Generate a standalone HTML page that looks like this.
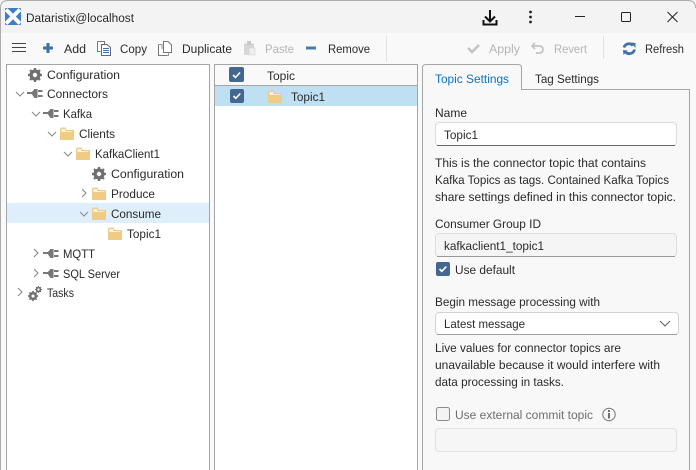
<!DOCTYPE html>
<html><head><meta charset="utf-8">
<style>
html,body{margin:0;padding:0;width:696px;height:470px;overflow:hidden;background:#f3f3f3}
svg{display:block}
text{font-family:"Liberation Sans",sans-serif;font-size:12.4px;fill:#2a2a2a}
.d{fill:#b5b5b5}
.g{fill:#6e6e6e}
</style></head><body>
<svg width="696" height="470" viewBox="0 0 696 470" xmlns="http://www.w3.org/2000/svg">
<defs>
<g id="folder"><path d="M0.5 2V12.5H13.5V3.5H6.5L5 1H1.5Z" fill="#f0cb85" stroke="#f0cb85"/><path d="M1.5 2H4.6L5.9 4.2H12.5V5H1.5Z" fill="#fff6e4"/></g>
<g id="plug"><path d="M0 4H5V6H0Z" fill="#777"/><path d="M4 5L7.5 1H10.5V10H7.5Z" fill="#777"/><path d="M11 2H15.5V4H11ZM11 7H15.5V9H11Z" fill="#777"/></g>
<g id="gear"><circle cx="7" cy="7" r="4.2" fill="none" stroke="#6f6f6f" stroke-width="2.8"/><path d="M7 0V14M0 7H14M2 2L12 12M12 2L2 12" stroke="#6f6f6f" stroke-width="2.2"/><circle cx="7" cy="7" r="2.2" fill="#fff"/></g>
<path id="cd" d="M0 0L4 4L8 0" fill="none" stroke="#8a8a8a" stroke-width="1.1"/>
<path id="cr" d="M0 0L4 4L0 8" fill="none" stroke="#8a8a8a" stroke-width="1.1"/>
</defs>

<!-- window -->
<rect x="0" y="0" width="696" height="470" fill="#f3f3f3"/>
<rect x="0" y="33" width="696" height="437" fill="#f9f9f9"/>
<path d="M0.5 470V8Q0.5 0.5 8 0.5H688Q695.5 0.5 695.5 8" fill="none" stroke="#ababab"/>

<!-- title bar -->
<rect x="5" y="8" width="16" height="17" rx="1" fill="#3f7fc0"/>
<path d="M6 9.5L20 23.5M20 9.5L6 23.5" stroke="#fff" stroke-width="4"/>
<text x="26" y="22" textLength="108" lengthAdjust="spacingAndGlyphs" fill="#1a1a1a">Dataristix@localhost</text>
<path d="M490 10V21M485 16.5L490 21.5L495 16.5" fill="none" stroke="#111" stroke-width="2"/>
<path d="M483.5 20V24.5H496.5V20" fill="none" stroke="#111" stroke-width="2"/>
<circle cx="530.5" cy="12" r="1.4" fill="#222"/><circle cx="530.5" cy="17" r="1.4" fill="#222"/><circle cx="530.5" cy="22" r="1.4" fill="#222"/>
<rect x="575" y="16" width="10" height="1" fill="#222"/>
<rect x="621.5" y="12.5" width="9" height="9" rx="1" fill="none" stroke="#222"/>
<path d="M667.5 12L677.5 22M677.5 12L667.5 22" stroke="#222" stroke-width="1"/>

<!-- toolbar -->
<path d="M12 43.5H26M12 47.5H26M12 51.5H26" stroke="#444" stroke-width="1"/>
<path d="M48 43V53M43 48H53" stroke="#3f73a8" stroke-width="3"/>
<text x="64" y="53" textLength="22" lengthAdjust="spacingAndGlyphs">Add</text>
<path d="M97.5 41.5H104.5V44M97.5 41.5V51.5H100.5" fill="#fff" stroke="#777"/>
<path d="M101.5 44.5H107L110.5 47.5V55.5H101.5Z" fill="#fff" stroke="#666"/>
<path d="M103 48.5H109M103 50.5H109M103 52.5H109" stroke="#3f73a8"/>
<text x="120" y="53" textLength="27" lengthAdjust="spacingAndGlyphs">Copy</text>
<path d="M158.5 44.5H162V55.5H168.5V44.5" fill="none" stroke="#999"/>
<path d="M158.5 44.5V55.5H167M163.5 41.5H168L171.5 45V52.5H163.5Z" fill="#fff" stroke="#777"/>
<text x="182" y="53" textLength="50" lengthAdjust="spacingAndGlyphs">Duplicate</text>
<path d="M244 43.5H254V55H244Z" fill="#d6d6d6"/><rect x="247" y="41" width="4" height="4" fill="#cacaca"/><rect x="249" y="48" width="6" height="7" fill="#eee" stroke="#d0d0d0" stroke-width=".6"/>
<text x="265" y="53" class="d" textLength="29" lengthAdjust="spacingAndGlyphs">Paste</text>
<rect x="306" y="46.5" width="10" height="3" fill="#4f7cab"/>
<text x="328" y="53" textLength="42" lengthAdjust="spacingAndGlyphs">Remove</text>
<rect x="386" y="36" width="1" height="26" fill="#e2e2e2"/>
<path d="M468 48L472 52L479 45" fill="none" stroke="#c4c4c4" stroke-width="2.6"/>
<text x="489" y="53" class="d" textLength="31" lengthAdjust="spacingAndGlyphs">Apply</text>
<path d="M532 46H539Q543 46 543 49.5T539 53H536M535 43L532 46L535 49" fill="none" stroke="#c4c4c4" stroke-width="1.7"/>
<text x="554" y="53" class="d" textLength="33" lengthAdjust="spacingAndGlyphs">Revert</text>
<rect x="603" y="36" width="1" height="23" fill="#e2e2e2"/>
<path d="M624 47.5A5.3 5.3 0 0 1 633 45.5M634.5 49.5A5.3 5.3 0 0 1 625.5 52" fill="none" stroke="#3f73a8" stroke-width="2.8"/>
<path d="M631 42.5L635.5 43V48ZM623 50L627.5 50.5L623.5 55Z" fill="#3f73a8"/>
<text x="645" y="53" textLength="39" lengthAdjust="spacingAndGlyphs">Refresh</text>

<!-- tree -->
<rect x="6.5" y="64.5" width="203" height="410" fill="#fff" stroke="#a5a5a5"/>
<rect x="7" y="203" width="202" height="20" fill="#deeefa"/>
<use href="#gear" x="28" y="68"/>
<text x="47" y="79" textLength="73" lengthAdjust="spacingAndGlyphs">Configuration</text>
<use href="#cd" x="16" y="92"/><use href="#plug" x="27" y="88"/>
<text x="47" y="98" textLength="61" lengthAdjust="spacingAndGlyphs">Connectors</text>
<use href="#cd" x="32" y="112"/><use href="#plug" x="43" y="108"/>
<text x="63" y="118" textLength="29" lengthAdjust="spacingAndGlyphs">Kafka</text>
<use href="#cd" x="48" y="132"/><use href="#folder" x="60" y="127"/>
<text x="79" y="138" textLength="36" lengthAdjust="spacingAndGlyphs">Clients</text>
<use href="#cd" x="64" y="152"/><use href="#folder" x="76" y="147"/>
<text x="95" y="158" textLength="65" lengthAdjust="spacingAndGlyphs">KafkaClient1</text>
<use href="#gear" x="92" y="167"/>
<text x="111" y="178" textLength="73" lengthAdjust="spacingAndGlyphs">Configuration</text>
<use href="#cr" x="82" y="189"/><use href="#folder" x="92" y="187"/>
<text x="111" y="198" textLength="44" lengthAdjust="spacingAndGlyphs">Produce</text>
<use href="#cd" x="80" y="212"/><use href="#folder" x="92" y="207"/>
<text x="111" y="218" textLength="50" lengthAdjust="spacingAndGlyphs">Consume</text>
<use href="#folder" x="108" y="227"/>
<text x="127" y="238" textLength="34" lengthAdjust="spacingAndGlyphs">Topic1</text>
<use href="#cr" x="34" y="249"/><use href="#plug" x="43" y="248"/>
<text x="63" y="258" textLength="32" lengthAdjust="spacingAndGlyphs">MQTT</text>
<use href="#cr" x="34" y="269"/><use href="#plug" x="43" y="268"/>
<text x="63" y="278" textLength="57" lengthAdjust="spacingAndGlyphs">SQL Server</text>
<use href="#cr" x="18" y="288"/>
<g transform="translate(28 291) scale(.72)"><use href="#gear"/></g>
<g transform="translate(35 286) scale(.5)"><use href="#gear"/></g>
<text x="47" y="297" textLength="27" lengthAdjust="spacingAndGlyphs">Tasks</text>

<!-- list -->
<rect x="214.5" y="64.5" width="203" height="410" fill="#fff" stroke="#a5a5a5"/>
<rect x="215" y="65" width="202" height="20" fill="#f9f9f9"/>
<rect x="215" y="85" width="202" height="1" fill="#a5a5a5"/>
<rect x="215" y="86" width="202" height="20" fill="#bfdff3"/>
<rect x="229" y="67" width="15" height="15" rx="2" fill="#44678f"/>
<path d="M233 75L235.5 77.5L240 72.5" fill="none" stroke="#fff" stroke-width="1.6"/>
<rect x="230" y="89" width="14" height="14" rx="2" fill="#44678f"/>
<path d="M233.5 96L235.8 98.3L240.3 93.5" fill="none" stroke="#fff" stroke-width="1.6"/>
<text x="267" y="80" textLength="28" lengthAdjust="spacingAndGlyphs">Topic</text>
<use href="#folder" x="268" y="90"/>
<text x="291" y="101" textLength="34" lengthAdjust="spacingAndGlyphs">Topic1</text>

<!-- tabs -->
<path d="M422.5 474V68Q422.5 64.5 426 64.5H518Q521.5 64.5 521.5 68V89.5H689.5V474Z" fill="#f8f8f8" stroke="#a5a5a5"/>
<text x="435" y="83" textLength="74" lengthAdjust="spacingAndGlyphs" style="fill:#0a72c4">Topic Settings</text>
<text x="535" y="83" textLength="64" lengthAdjust="spacingAndGlyphs">Tag Settings</text>

<text x="435" y="117" textLength="32" lengthAdjust="spacingAndGlyphs">Name</text>
<rect x="435.5" y="122.5" width="241" height="23" rx="3.5" fill="#fff" stroke="#dcdcdc"/>
<path d="M437 145.5H675" stroke="#666"/>
<text x="444" y="139" textLength="34" lengthAdjust="spacingAndGlyphs">Topic1</text>
<text x="435" y="167" textLength="211" lengthAdjust="spacingAndGlyphs">This is the connector topic that contains</text>
<text x="435" y="184" textLength="234" lengthAdjust="spacingAndGlyphs">Kafka Topics as tags. Contained Kafka Topics</text>
<text x="435" y="201" textLength="241" lengthAdjust="spacingAndGlyphs">share settings defined in this connector topic.</text>

<text x="435" y="228" textLength="106" lengthAdjust="spacingAndGlyphs">Consumer Group ID</text>
<rect x="435.5" y="233.5" width="241" height="23" rx="3.5" fill="#f5f5f5" stroke="#dcdcdc"/>
<path d="M437 256.5H675" stroke="#999"/>
<text x="444" y="250" textLength="100" lengthAdjust="spacingAndGlyphs">kafkaclient1_topic1</text>
<rect x="436" y="262" width="14" height="14" rx="2" fill="#44678f"/>
<path d="M439.5 269L441.8 271.3L446.3 266.5" fill="none" stroke="#fff" stroke-width="1.6"/>
<text x="455" y="274" textLength="60" lengthAdjust="spacingAndGlyphs">Use default</text>

<text x="435" y="306" textLength="165" lengthAdjust="spacingAndGlyphs">Begin message processing with</text>
<rect x="435.5" y="312.5" width="243" height="22" rx="3.5" fill="#fff" stroke="#d2d2d2"/>
<path d="M437 334.5H677" stroke="#a0a0a0"/>
<text x="444" y="328" textLength="81" lengthAdjust="spacingAndGlyphs">Latest message</text>
<path d="M660 321L665 326L670 321" fill="none" stroke="#666" stroke-width="1.1"/>
<text x="435" y="352" textLength="186" lengthAdjust="spacingAndGlyphs">Live values for connector topics are</text>
<text x="435" y="369" textLength="225" lengthAdjust="spacingAndGlyphs">unavailable because it would interfere with</text>
<text x="435" y="386" textLength="129" lengthAdjust="spacingAndGlyphs">data processing in tasks.</text>

<rect x="436.5" y="407.5" width="13" height="13" rx="2" fill="#f4f4f4" stroke="#8a8a8a"/>
<text x="455" y="419" class="g" textLength="138" lengthAdjust="spacingAndGlyphs">Use external commit topic</text>
<circle cx="609" cy="414.5" r="6.2" fill="none" stroke="#808080" stroke-width="1.1"/>
<rect x="608" y="410" width="2" height="2" fill="#707070"/><rect x="608" y="413" width="2" height="5.5" fill="#707070"/>
<rect x="435.5" y="428.5" width="241" height="23" rx="3.5" fill="#f6f6f6" stroke="#e2e2e2"/>
</svg>
</body></html>
